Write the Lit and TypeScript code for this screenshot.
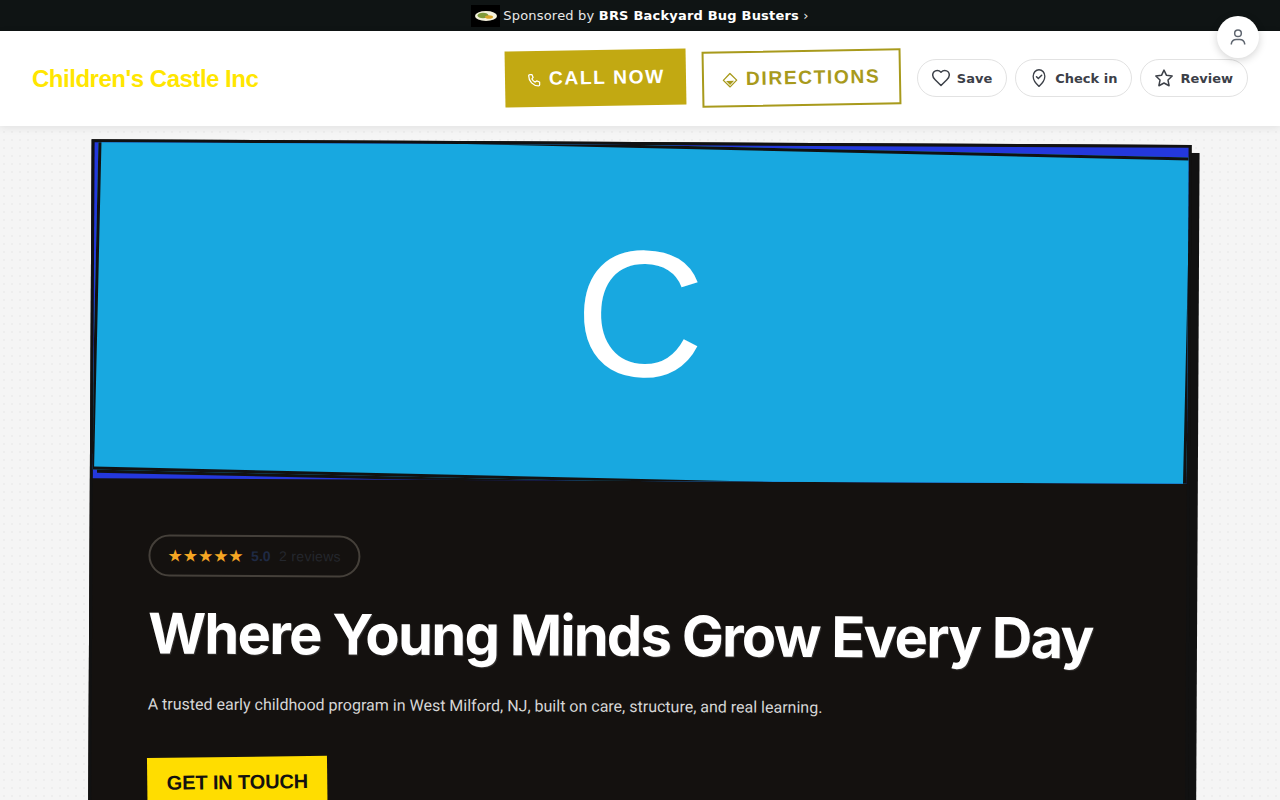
import { LitElement, html, css } from "lit";
import { customElement } from "lit/decorators.js";

@customElement("app-root")
export class AppRoot extends LitElement {
  static styles = css`
    :host { display: block; height: 800px; overflow: hidden; position: relative; background-color: #f5f5f5;
      background-image: radial-gradient(#eeeeee 1px, transparent 1px); background-size: 8px 8px; font-family: "DejaVu Sans", sans-serif; }
    .sponsor { height: 31px; background: #0f1414; color: #e8e8e8; display: flex; align-items: center; justify-content: center; gap: 3px; font-size: 13px; letter-spacing: .2px; }
    .sponsor b { color: #fff; font-weight: 700; }
    .logo { width: 29px; height: 22px; background: #000; display: flex; align-items: center; justify-content: center; }
    .header { height: 95px; background: #fff; box-shadow: 0 2px 8px rgba(0,0,0,.08); display: flex; align-items: center; justify-content: space-between; padding: 0 32px; position: relative; }
    .brand { font: 700 24px "Liberation Sans", sans-serif; letter-spacing: -.48px; color: #ffe600; }
    .actions { display: flex; align-items: center; gap: 8px; margin-bottom: 2px; }
    .cta { display: flex; align-items: center; gap: 8px; font: 700 19.200px "Liberation Sans", sans-serif; letter-spacing: 1.600px; transform: rotate(-1deg); box-sizing: border-box; height: 56px; margin-right: 8px; padding-bottom: 1px; }
    .cta svg { margin-top: 3px; }
    .call { background: #c2a912; color: #fff; padding-left: 22px; padding-right: 21.500px; }
    .dir { background: #fff; color: #a89a1c; border: 2px solid #a89a1c; padding-left: 18px; padding-right: 18.400px; }
    .pill { display: flex; align-items: center; gap: 6px; height: 38px; box-sizing: border-box; padding: 0 14px 0 13px; border: 1px solid #e2e2e2; border-radius: 19px; background: #fff; color: #3c4048; font-weight: 700; font-size: 13px; }
    .pill svg { width: 20px; height: 20px; }
    .pill span { padding-top: 2px; }
    .acct { position: absolute; left: 1217px; top: 16px; width: 42px; height: 42px; border-radius: 50%; background: #fff; box-shadow: 0 2px 8px rgba(0,0,0,.18); display: flex; align-items: center; justify-content: center; }
    .main { padding: 16px 0 0 89px; }
    .card { transform: rotate(.3deg); width: 1100px; border: 3px solid #111; box-sizing: border-box; box-shadow: 8px 8px 0 #111; background: #14110f; height: 1000px; }
    .media { height: 336px; background: #2438dc; overflow: hidden; }
    .photo { height: 337px; margin: 0 -1px 0 .5px; padding-right: 4px; background: #18a8e0; border: 3px solid #111; box-shadow: 6px 3px 0 #111; transform: rotate(1deg); box-sizing: border-box; display: flex; align-items: center; justify-content: center; color: #fff; font: 400 180px "Liberation Sans", sans-serif; }
    .body { padding: 56px 56px; color: #fff; }
    .rating { display: inline-flex; align-items: center; height: 42px; box-sizing: border-box; padding: 0 17px; border: 2px solid #45403a; border-radius: 21px; font: 14px "Liberation Sans", sans-serif; }
    .stars { color: #f5a623; font: 17px "DejaVu Sans", sans-serif; margin-right: 7.500px; }
    .score { color: #1f2a44; font-weight: 700; margin-right: 8.500px; }
    .count { color: #24272d; letter-spacing: .3px; }
    h1 { font: 700 56px/1.1 Inter, sans-serif; letter-spacing: -1.680px; margin: 27px 0 0; color: #fff; white-space: nowrap; text-shadow: 1px 1px 1px rgba(255,255,255,.15); }
    p { font: 16px Roboto, sans-serif; color: #d6d6d6; margin: 29px 0 0; }
    .go { display: inline-block; margin-top: 43px; background: #ffdd00; color: #14110f; font: 700 20px "Liberation Sans", sans-serif; letter-spacing: -.15px; padding: 14px 19.500px; transform: rotate(-1deg); }
  `;
  render() {
    return html`
      <div class="sponsor">
        <span class="logo"><svg width="24" height="12" viewBox="0 0 24 12"><ellipse cx="12" cy="6" rx="11" ry="5" fill="#f4f1dc"/><ellipse cx="9" cy="5.500" rx="5.500" ry="2.800" fill="#7f9a3a"/><ellipse cx="15" cy="7" rx="4" ry="1.800" fill="#d9a52b"/></svg></span>
        <span>Sponsored by <b>BRS Backyard Bug Busters</b> ›</span>
      </div>
      <div class="header">
        <div class="brand">Children's Castle Inc</div>
        <div class="actions">
          <div class="cta call"><svg width="14" height="14" viewBox="0 0 24 24" fill="none" stroke="#fff" stroke-width="2.200" stroke-linejoin="round"><path d="M5 2.500h3.500l2 5-2 2.500a12 12 0 0 0 5.500 5.500l2.500-2 5 2V20a2 2 0 0 1-2 2A17 17 0 0 1 3 4.500a2 2 0 0 1 2-2z"/></svg>CALL NOW</div>
          <div class="cta dir"><svg width="16" height="16" viewBox="0 0 24 24" fill="none" stroke="#a89a1c" stroke-width="2" stroke-linejoin="round"><path d="M12 2l10 10-10 10L2 12z"/><path d="M6 13h12l-6 6z" fill="#a89a1c" stroke="none"/></svg>DIRECTIONS</div>
          <div class="pill"><svg viewBox="0 0 24 24" fill="none" stroke="#3c4048" stroke-width="1.800" stroke-linejoin="round"><path d="M19 14c1.490-1.460 3-3.210 3-5.500A5.500 5.500 0 0 0 16.500 3c-1.760 0-3 .5-4.500 2-1.500-1.500-2.740-2-4.500-2A5.500 5.500 0 0 0 2 8.500c0 2.300 1.500 4.050 3 5.500l7 7Z"/></svg><span>Save</span></div>
          <div class="pill"><svg viewBox="0 0 24 24" fill="none" stroke="#3c4048" stroke-width="1.800" stroke-linejoin="round" stroke-linecap="round"><path d="M20 10c0 6-8 12-8 12s-8-6-8-12a8 8 0 0 1 16 0z" transform="translate(1.500 0) scale(.875 1)"/><path d="M9 10.500l2.200 2.200 4-4"/></svg><span>Check in</span></div>
          <div class="pill"><svg viewBox="0 0 24 24" fill="none" stroke="#3c4048" stroke-width="1.800" stroke-linejoin="round"><path d="M12 2.500l3 6.300 6.800.9-5 4.800 1.300 6.800-6.100-3.300-6.100 3.300 1.300-6.800-5-4.800 6.800-.9z"/></svg><span>Review</span></div>
        </div>
      </div>
      <div class="acct"><svg width="20" height="20" viewBox="0 0 24 24" fill="none" stroke="#5f6670" stroke-width="1.800"><circle cx="12" cy="7.500" r="4"/><path d="M4 21v-1a6 6 0 0 1 6-5h4a6 6 0 0 1 6 5v1"/></svg></div>
      <div class="main">
        <div class="card">
          <div class="media"><div class="photo">C</div></div>
          <div class="body">
            <div class="rating"><span class="stars">★★★★★</span><span class="score">5.0</span><span class="count">2 reviews</span></div>
            <h1>Where Young Minds Grow Every Day</h1>
            <p>A trusted early childhood program in West Milford, NJ, built on care, structure, and real learning.</p>
            <div class="go">GET IN TOUCH</div>
          </div>
        </div>
      </div>
    `;
  }
}
